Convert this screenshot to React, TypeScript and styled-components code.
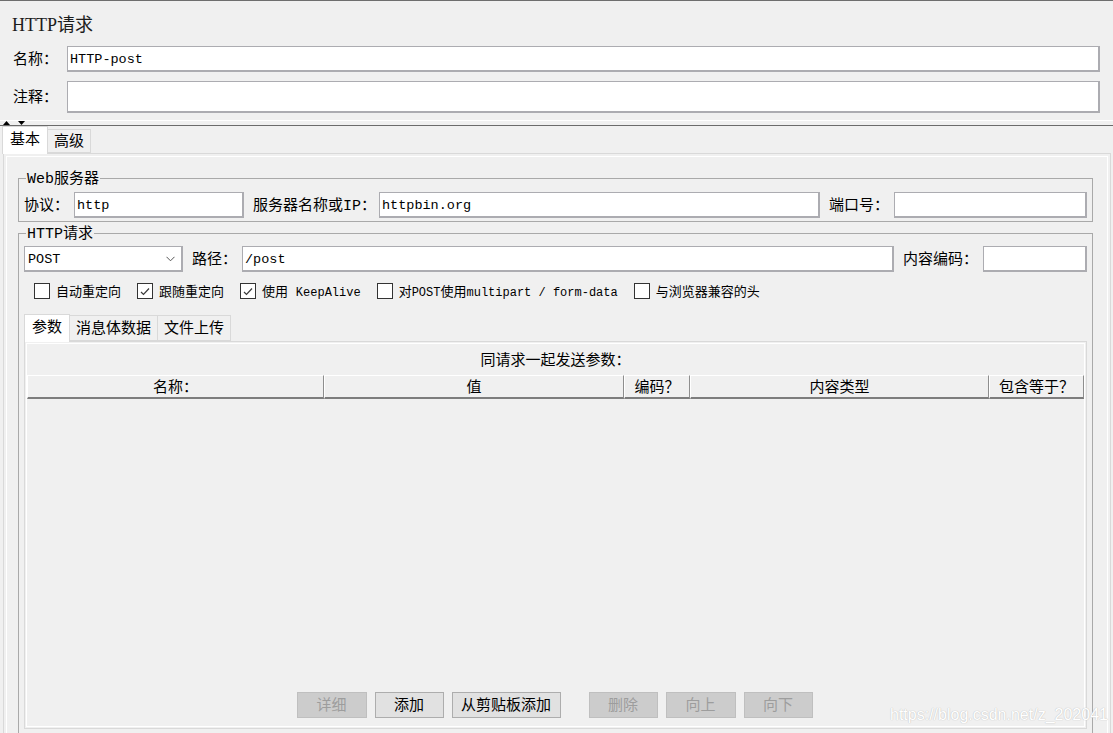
import React from 'react'
import styled, { createGlobalStyle } from 'styled-components'

const uiFont = `"Liberation Mono", "Noto Sans CJK SC", monospace`
const titleFont = `"Liberation Serif", "Noto Sans CJK SC", serif`
const tabLine = '#d9d9d9'

const GlobalStyle = createGlobalStyle`
  * { box-sizing: border-box; }
  html, body { margin: 0; padding: 0; background: #f0f0f0; }
  body { font-family: ${uiFont}; color: #000; }
`

const Window = styled.div`
  position: relative;
  display: flex;
  flex-direction: column;
  width: 1113px;
  height: 733px;
  overflow: hidden;
  background: #f0f0f0;
  border-top: 1px solid #6e6e6e;
`

const Header = styled.div`
  display: flex;
  flex-direction: column;
  padding: 11px 13px 0 12px;
`

const Title = styled.div`
  padding-top: 1px;
  font-family: ${titleFont};
  font-size: 18px;
  line-height: 25px;
  color: #1c1c1c;
`

const FieldRow = styled.div<{ $top: number }>`
  display: flex;
  align-items: center;
  gap: 9px;
  margin-top: ${p => p.$top}px;
  padding-left: 1px;
`

// CJK glyphs sit high in their line box, so labels get a little top padding
const Label = styled.span<{ $w?: number }>`
  flex: none;
  width: ${p => (p.$w ? `${p.$w}px` : 'auto')};
  padding-top: 4px;
  font-size: 15px;
  line-height: 18px;
  white-space: nowrap;
`

const TextBox = styled.input<{ $w?: number; $h?: number }>`
  flex: ${p => (p.$w ? 'none' : '1')};
  width: ${p => (p.$w ? `${p.$w}px` : 'auto')};
  min-width: 0;
  height: ${p => p.$h ?? 26}px;
  margin: 0;
  padding: 1px 2px 0;
  border: solid #acacb1;
  border-width: 1px 2px 2px 1px;
  border-radius: 0;
  background: #fff;
  font-family: "Liberation Mono", monospace;
  font-size: 13.5px;
  color: #000;
  outline: none;
`

const Splitter = styled.div`
  display: flex;
  align-items: flex-start;
  gap: 8px;
  height: 6px;
  margin-top: 7px;
  padding-left: 3px;
  border-top: 1px solid #fff;
  border-bottom: 1px solid #6b6b6b;
`

const TabStrip = styled.div<{ $indent: number; $top?: number }>`
  position: relative;
  z-index: 1;
  display: flex;
  align-items: flex-end;
  height: 28px;
  margin-top: ${p => p.$top ?? 0}px;
  padding-left: ${p => p.$indent}px;
`

const Tab = styled.div<{ $active?: boolean; $pad: number; $h?: number }>`
  display: flex;
  align-items: center;
  height: ${p => (p.$active ? 28 : p.$h ?? 24)}px;
  margin-bottom: ${p => (p.$active ? -1 : 0)}px;
  padding: ${p => (p.$active ? 1 : 3)}px ${p => p.$pad}px 0;
  border: 1px solid ${tabLine};
  border-bottom: ${p => (p.$active ? 'none' : `1px solid ${tabLine}`)};
  border-left-width: ${p => (p.$active ? 1 : 0)}px;
  background: ${p => (p.$active ? '#fff' : '#f0f0f0')};
  font-size: 15px;
  line-height: 18px;
  white-space: nowrap;
  &:first-child {
    border-left-width: 1px;
  }
`

const Panel = styled.div`
  margin: 0 2px 0 3px;
  padding: 2px 2px 0;
  border: 1px solid ${tabLine};
  border-bottom: none;
`

const PanelBody = styled.div`
  padding: 12px 14px 0 11px;
  border: 1px solid #fff;
  border-bottom: none;
`

const Group = styled.fieldset<{ $top?: number; $bottom?: number }>`
  min-width: 0;
  margin: ${p => p.$top ?? 0}px 0 0;
  padding: 0 5px ${p => p.$bottom ?? 3}px;
  border: 1px solid #a9a9a9;
`

const Legend = styled.legend`
  margin-left: 2px;
  padding: 3px 1px 0;
  font-size: 15px;
  line-height: 16px;
`

const GroupRow = styled.div<{ $top: number }>`
  display: flex;
  align-items: center;
  margin-top: ${p => p.$top}px;
`

const Gap = styled.span`
  flex: none;
  width: 9px;
`

const Select = styled.div`
  flex: none;
  display: flex;
  align-items: center;
  justify-content: space-between;
  width: 159px;
  height: 26px;
  padding: 1px 6px 0 3px;
  border: solid #acacb1;
  border-width: 1px 2px 2px 1px;
  background: #fff;
  font-family: "Liberation Mono", monospace;
  font-size: 13.5px;
`

const CheckRow = styled.div`
  display: flex;
  align-items: center;
  height: 26px;
  margin-top: 6px;
  padding-left: 10px;
`

const CheckItem = styled.label<{ $first?: boolean }>`
  display: flex;
  align-items: center;
  gap: 6px;
  margin-left: ${p => (p.$first ? 0 : 16)}px;
  font-size: 13px;
  line-height: 16px;
  white-space: nowrap;
`

const CheckText = styled.span`
  padding-top: 3px;
`

const Latin = styled.span`
  font-size: 12px;
`

const Box = styled.span`
  display: flex;
  align-items: center;
  justify-content: center;
  width: 16px;
  height: 16px;
  border: 1px solid #333;
  background: #fff;
`

const SubPanel = styled.div`
  height: 388px;
  padding: 1px;
  border: 1px solid ${tabLine};
`

const SubBody = styled.div`
  display: flex;
  flex-direction: column;
  height: 100%;
  border: 1px solid #fff;
`

const Caption = styled.div`
  height: 31px;
  padding-top: 4px;
  text-align: center;
  font-size: 15px;
  line-height: 27px;
`

const HeadRow = styled.div`
  display: grid;
  grid-template-columns: 297px 300px 66px 299px 1fr;
`

const HeadCell = styled.div`
  height: 24px;
  padding-top: 4px;
  border-top: 1px solid #fff;
  border-left: 1px solid #fff;
  border-right: 1px solid #8e8e8e;
  border-bottom: 2px solid #7d7d7d;
  text-align: center;
  font-size: 15px;
  line-height: 17px;
  white-space: nowrap;
`

const TableBody = styled.div`
  flex: 1;
`

const ButtonBar = styled.div`
  display: flex;
  justify-content: center;
  gap: 8px;
  padding: 0 2px 8px 0;
`

const Button = styled.button<{ $w: number; $off?: boolean; $lead?: number }>`
  width: ${p => p.$w}px;
  height: 26px;
  margin: 0 0 0 ${p => p.$lead ?? 0}px;
  padding: 4px 0 0;
  border: 1px solid ${p => (p.$off ? '#bfbfbf' : '#adadad')};
  border-radius: 0;
  background: ${p => (p.$off ? '#cccccc' : '#e1e1e1')};
  color: ${p => (p.$off ? '#9d9d9d' : '#000')};
  font-family: ${uiFont};
  font-size: 15px;
  line-height: 18px;
`

const Watermark = styled.div`
  position: absolute;
  left: 890px;
  top: 704px;
  font-family: "Liberation Sans", Arial, sans-serif;
  font-size: 16px;
  line-height: 20px;
  color: #fff;
  text-shadow: 0 0 1px #bdbdbd, 0 0 1px #cfcfcf;
  white-space: nowrap;
`

const UpArrow = () => (
  <svg width="7" height="4" viewBox="0 0 7 4">
    <polygon points="0,4 3.5,0 7,4" fill="#000" />
  </svg>
)

const DownArrow = () => (
  <svg width="7" height="4" viewBox="0 0 7 4">
    <polygon points="0,0 7,0 3.5,4" fill="#000" />
  </svg>
)

const Chevron = () => (
  <svg width="9" height="6" viewBox="0 0 9 6">
    <polyline points="0.5,0.8 4.5,4.8 8.5,0.8" fill="none" stroke="#555" strokeWidth="1" />
  </svg>
)

const Check = () => (
  <svg width="12" height="12" viewBox="0 0 12 12">
    <polyline points="2,7 4.5,9.5 10,3.5" fill="none" stroke="#3a3a3a" strokeWidth="1.2" />
  </svg>
)

const Checkbox = ({ checked, first, children }: { checked?: boolean; first?: boolean; children: React.ReactNode }) => (
  <CheckItem $first={first}>
    <Box>{checked && <Check />}</Box>
    <CheckText>{children}</CheckText>
  </CheckItem>
)

const buttons = [
  { text: '详细', w: 70, off: true },
  { text: '添加', w: 69 },
  { text: '从剪贴板添加', w: 109 },
  { text: '删除', w: 69, off: true, lead: 20 },
  { text: '向上', w: 70, off: true },
  { text: '向下', w: 69, off: true },
]

const columns = ['名称：', '值', '编码？', '内容类型', '包含等于？']

export default function App() {
  return (
    <Window>
      <GlobalStyle />
      <Header>
        <Title>HTTP请求</Title>
        <FieldRow $top={8}>
          <Label>名称：</Label>
          <TextBox defaultValue="HTTP-post" />
        </FieldRow>
        <FieldRow $top={9}>
          <Label>注释：</Label>
          <TextBox $h={32} defaultValue="" />
        </FieldRow>
      </Header>

      <Splitter>
        <UpArrow />
        <DownArrow />
      </Splitter>

      <TabStrip $indent={2}>
        <Tab $active $pad={7}>基本</Tab>
        <Tab $pad={6}>高级</Tab>
      </TabStrip>

      <Panel>
        <PanelBody>
          <Group>
            <Legend>Web服务器</Legend>
            <GroupRow $top={4}>
              <Label $w={50}>协议：</Label>
              <TextBox $w={170} defaultValue="http" />
              <Gap />
              <Label $w={126}>服务器名称或IP：</Label>
              <TextBox defaultValue="httpbin.org" />
              <Gap />
              <Label $w={65}>端口号：</Label>
              <TextBox $w={193} defaultValue="" />
            </GroupRow>
          </Group>

          <Group $top={2} $bottom={12}>
            <Legend>HTTP请求</Legend>
            <GroupRow $top={3}>
              <Select>
                <span>POST</span>
                <Chevron />
              </Select>
              <Gap />
              <Label $w={50}>路径：</Label>
              <TextBox defaultValue="/post" />
              <Gap />
              <Label $w={80}>内容编码：</Label>
              <TextBox $w={104} defaultValue="" />
            </GroupRow>

            <CheckRow>
              <Checkbox first>自动重定向</Checkbox>
              <Checkbox checked>跟随重定向</Checkbox>
              <Checkbox checked>
                使用 <Latin>KeepAlive</Latin>
              </Checkbox>
              <Checkbox>
                对<Latin>POST</Latin>使用<Latin>multipart / form-data</Latin>
              </Checkbox>
              <Checkbox>与浏览器兼容的头</Checkbox>
            </CheckRow>

            <TabStrip $indent={0} $top={9}>
              <Tab $active $pad={7}>参数</Tab>
              <Tab $pad={6} $h={26}>消息体数据</Tab>
              <Tab $pad={6} $h={26}>文件上传</Tab>
            </TabStrip>

            <SubPanel>
              <SubBody>
                <Caption>同请求一起发送参数：</Caption>
                <HeadRow>
                  {columns.map(c => (
                    <HeadCell key={c}>{c}</HeadCell>
                  ))}
                </HeadRow>
                <TableBody />
                <ButtonBar>
                  {buttons.map(b => (
                    <Button key={b.text} $w={b.w} $off={b.off} $lead={b.lead}>
                      {b.text}
                    </Button>
                  ))}
                </ButtonBar>
              </SubBody>
            </SubPanel>
          </Group>
        </PanelBody>
      </Panel>

      <Watermark>https://blog.csdn.net/z_202041</Watermark>
    </Window>
  )
}
